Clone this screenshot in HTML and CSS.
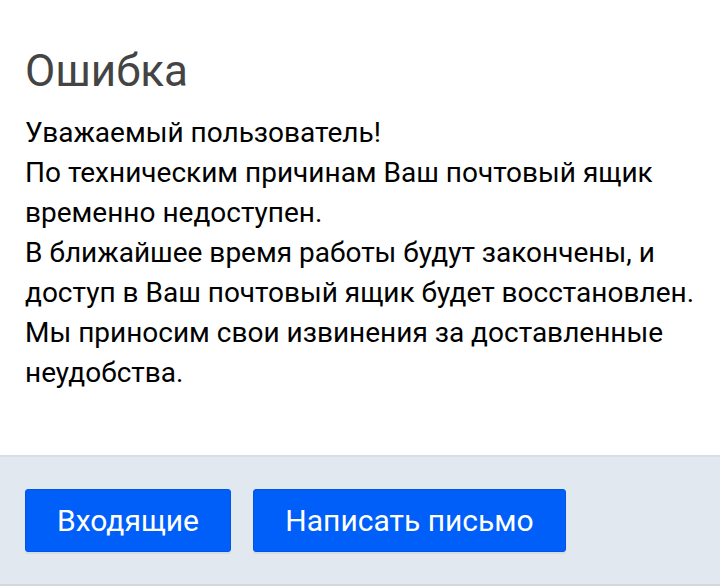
FILE: index.html
```html
<!DOCTYPE html>
<html lang="ru">
<head>
<meta charset="utf-8">
<link rel="stylesheet" href="styles.css">
</head>
<body>
<div class="page">
  <div class="content">
    <h1 class="title">Ошибка</h1>
    <p class="text">Уважаемый пользователь!<br>По техническим причинам Ваш почтовый ящик временно недоступен.<br>В ближайшее время работы будут закончены, и доступ в Ваш почтовый ящик будет восстановлен.<br>Мы приносим свои извинения за доставленные неудобства.</p>
  </div>
  <div class="footer">
    <a class="btn btn-inbox">Входящие</a>
    <a class="btn btn-compose">Написать письмо</a>
  </div>
</div>
</body>
</html>
```
FILE: styles.css
```css
html, body {
  margin: 0;
  padding: 0;
  background: #fff;
}
body {
  font-family: Roboto, "Noto Sans", sans-serif;
  width: 720px;
  height: 586px;
  overflow: hidden;
}
.page {
  display: flex;
  flex-direction: column;
  height: 586px;
}
.content {
  padding: 45px 20px 0 25px;
  height: 455px;
  box-sizing: border-box;
  flex: none;
}
.title {
  margin: 0 0 16px 0;
  font-weight: 400;
  font-size: 44px;
  line-height: 52px;
  color: #444;
}
.text {
  margin: 0;
  font-size: 28px;
  line-height: 40px;
  color: #000;
}
.footer {
  flex: 1;
  background: #e1e8f0;
  border-top: 2px solid #d9dee5;
  border-bottom: 2px solid #d3d7dc;
  display: flex;
  align-items: flex-start;
  gap: 22px;
  padding: 32px 25px 0 25px;
}
.btn {
  display: flex;
  align-items: center;
  justify-content: center;
  height: 63px;
  box-sizing: border-box;
  background: #005ff9;
  border: 1px solid #0056e2;
  color: #fff;
  font-size: 30px;
  border-radius: 3px;
  box-shadow: 0 2px 0 #d3dbe6;
}
.btn-inbox { width: 206px; }
.btn-compose { width: 313px; }
```
